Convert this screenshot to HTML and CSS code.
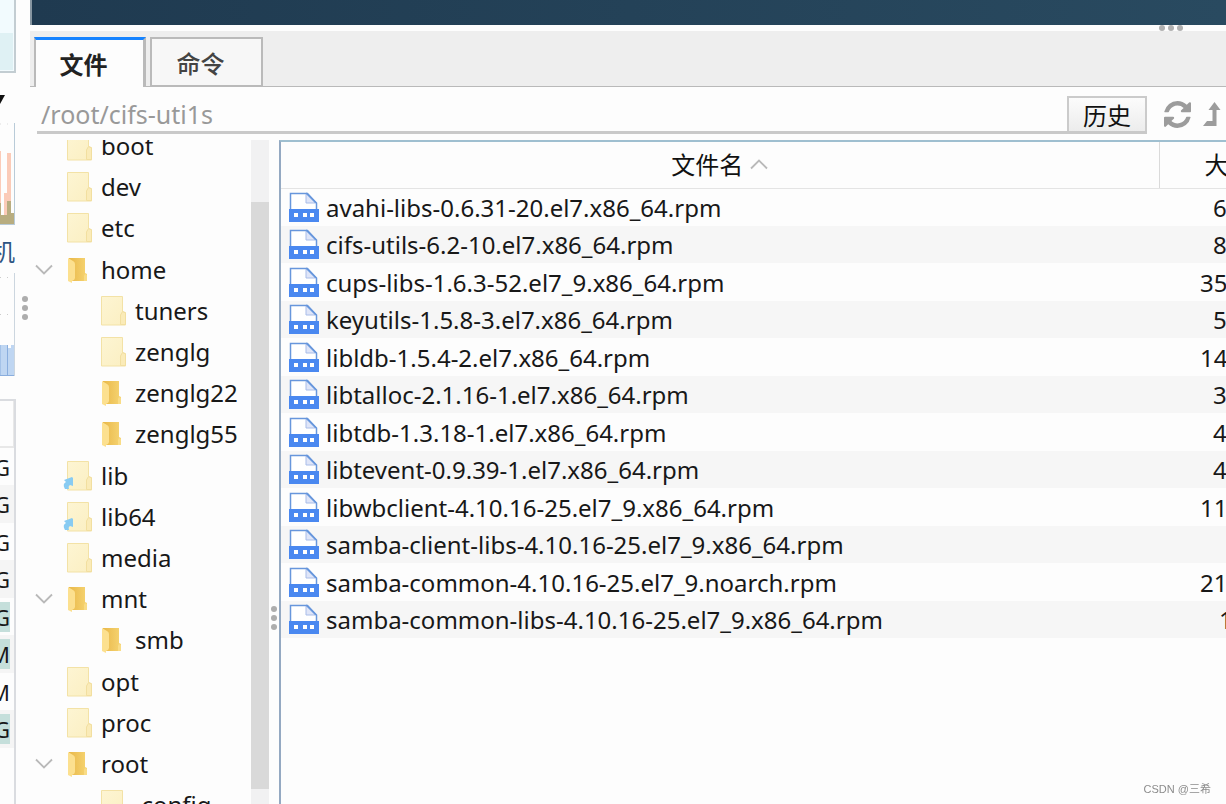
FILE: index.html
```
<!DOCTYPE html>
<html lang="zh-CN">
<head>
<meta charset="utf-8">
<title>文件</title>
<link rel="stylesheet" href="styles.css">
</head>
<body>
<svg class="defs" width="0" height="0" aria-hidden="true">
  <defs>
    <linearGradient id="pale" x1="0" x2="1" y1="0" y2="1"><stop offset="0" stop-color="#fdf5d3"/><stop offset="1" stop-color="#fbefc2"/></linearGradient>
    <linearGradient id="gold" x1="0" x2="1"><stop offset="0" stop-color="#e9b849"/><stop offset="1" stop-color="#f6d472"/></linearGradient>
    <symbol id="folder" viewBox="0 0 28 32">
      <path d="M1.500 1.500h21v15l3 1v12.500h-24z" fill="url(#pale)" stroke="#f3e2a6"/>
      <path d="M20.500 29.500v-9.500l2-3.500 3 1.500v11.500z" fill="#faebb8" stroke="#f2dfa0"/>
    </symbol>
    <symbol id="open-folder" viewBox="0 0 28 32">
      <path d="M3 4h16v15l2 1v7H3z" fill="url(#gold)"/>
      <path d="M2 4l5 3q2 1 2 3v14q0 2-3 3v2l-4-2z" fill="#fce08f"/>
      <path d="M18 27v-5l1-2 2 1v6z" fill="#f9dc86"/>
    </symbol>
    <symbol id="rpm" viewBox="0 0 32 32">
      <path d="M2.500 19V1.500h17L28.500 11v8" fill="#fff" stroke="#6796dc" stroke-width="1.500"/>
      <path d="M18 2v9h9" fill="#dfe5f8" stroke="#a9bde9"/>
      <path d="M18 1l10 10" stroke="#6796dc" stroke-width="1.500"/>
      <path d="M1 17h30v13H1z" fill="#4a88f0"/>
      <path d="M6 21h4v4H6zM15 21h4v4h-4zM22 21h4v4h-4z" fill="#fff"/>
    </symbol>
    <symbol id="chevron" viewBox="0 0 18 12"><path d="M1 1.500l8 8 8-8" fill="none" stroke="#b9b9b9" stroke-width="1.800"/></symbol>
  </defs>
</svg>

<div class="app">
  <aside class="monitor">
    <div class="gauge"><div class="gauge-fill"></div></div>
    <svg class="drop" viewBox="0 0 15 10"><path d="M-4 0h9L0 9z" fill="#111"/></svg>
    <svg class="chart net" viewBox="0 0 15 102">
      <path d="M0 1h15M0 68h15" stroke="#ddd" stroke-dasharray="1 6"/>
      <path d="M0 28h1v73H0zM4 70h4v31H4zM7 30h4v71H7z" fill="#fbcbb8"/>
      <path d="M0 80h1v12h6V78h4v12h4v11H0z" fill="#b8ad80"/>
      <path d="M14.500 0v101M0 101.500h15" stroke="#b9cbd8"/>
    </svg>
    <div class="host">机</div>
    <svg class="chart disk" viewBox="0 0 15 104">
      <path d="M0 4.500h15M0 41.500h15" stroke="#ccc" stroke-dasharray="1 6"/>
      <path d="M0 72h8v3h3v-3h4v31H0z" fill="#bfd6f2"/>
      <path d="M0 72v31M7.500 72v31M0 102.500h15" stroke="#8aaede"/>
      <path d="M14.500 0v103" stroke="#ccd6df"/>
    </svg>
    <div class="usage">
      <div class="usage-head"></div>
      <div class="usage-row"><span>G</span></div>
      <div class="usage-row"><span>G</span></div>
      <div class="usage-row"><span>G</span></div>
      <div class="usage-row"><span>G</span></div>
      <div class="usage-row"><span class="hot">G</span></div>
      <div class="usage-row"><span class="hot">M</span></div>
      <div class="usage-row"><span>M</span></div>
      <div class="usage-row"><span class="hot">G</span></div>
    </div>
  </aside>
  <div class="gutter"><svg class="grip" viewBox="0 0 6 26"><g fill="#adadad"><circle cx="3" cy="4" r="3"/><circle cx="3" cy="13" r="3"/><circle cx="3" cy="22" r="3"/></g></svg></div>

  <main class="main">
    <div class="terminal"></div>
    <div class="hsplit"><svg class="hgrip" viewBox="0 0 26 6"><g fill="#b0b0b0"><circle cx="4" cy="3" r="3"/><circle cx="13" cy="3" r="3"/><circle cx="22" cy="3" r="3"/></g></svg></div>
    <nav class="tabs">
      <button class="tab active" type="button">文件</button>
      <button class="tab" type="button">命令</button>
    </nav>
    <div class="pathbar">
      <div class="pathfield">
        <input class="path" type="text" value="/root/cifs-uti1s" aria-label="路径">
        <button class="history" type="button">历史</button>
      </div>
      <button class="tool" type="button" aria-label="刷新"><svg class="refresh" viewBox="0 0 1536 1536"><path fill="#9c9c9c" d="M1511 928q0 5-1 7-64 268-268 434.500t-478 166.500q-146 0-282.500-55t-243.500-157l-129 129q-19 19-45 19t-45-19-19-45v-448q0-26 19-45t45-19h448q26 0 45 19t19 45-19 45l-137 137q71 66 161 102t187 36q134 0 250-65t186-179q11-17 53-117 8-23 30-23h192q13 0 22.500 9.500t9.500 22.500zm25-800v448q0 26-19 45t-45 19h-448q-26 0-45-19t-19-45 19-45l138-138q-148-137-349-137-134 0-250 65t-186 179q-11 17-53 117-8 23-30 23h-199q-13 0-22.500-9.500t-9.500-22.500v-7q65-268 270-434.500t480-166.500q146 0 284 55.500t245 156.500l130-129q19-19 45-19t45 19 19 45z"/></svg></button>
      <button class="tool up" type="button" aria-label="上级目录"><svg class="level" viewBox="0 0 18 26"><path fill="#9c9c9c" d="M11.500 1l6 8h-4v16H0l4-5h5.500V9h-4z"/></svg></button>
    </div>
    <div class="browser">
      <div class="tree-pane">
        <ul class="tree">
          <li><i class="twist"></i><svg class="fi"><use href="#folder"/></svg>boot</li>
          <li><i class="twist"></i><svg class="fi"><use href="#folder"/></svg>dev</li>
          <li><i class="twist"></i><svg class="fi"><use href="#folder"/></svg>etc</li>
          <li><svg class="twist"><use href="#chevron"/></svg><svg class="fi"><use href="#open-folder"/></svg>home</li>
          <li class="sub"><svg class="fi"><use href="#folder"/></svg>tuners</li>
          <li class="sub"><svg class="fi"><use href="#folder"/></svg>zenglg</li>
          <li class="sub"><svg class="fi"><use href="#open-folder"/></svg>zenglg22</li>
          <li class="sub"><svg class="fi"><use href="#open-folder"/></svg>zenglg55</li>
          <li><i class="twist"></i><svg class="fi"><use href="#folder"/><path d="M-2 20l8-3 1 1v8l-3-1q-2 1-1 4h-4q-3-5 1-7z" fill="#88cbf2"/></svg>lib</li>
          <li><i class="twist"></i><svg class="fi"><use href="#folder"/><path d="M-2 20l8-3 1 1v8l-3-1q-2 1-1 4h-4q-3-5 1-7z" fill="#88cbf2"/></svg>lib64</li>
          <li><i class="twist"></i><svg class="fi"><use href="#folder"/></svg>media</li>
          <li><svg class="twist"><use href="#chevron"/></svg><svg class="fi"><use href="#open-folder"/></svg>mnt</li>
          <li class="sub"><svg class="fi"><use href="#open-folder"/></svg>smb</li>
          <li><i class="twist"></i><svg class="fi"><use href="#folder"/></svg>opt</li>
          <li><i class="twist"></i><svg class="fi"><use href="#folder"/></svg>proc</li>
          <li><svg class="twist"><use href="#chevron"/></svg><svg class="fi"><use href="#open-folder"/></svg>root</li>
          <li class="sub"><svg class="fi"><use href="#folder"/></svg>.config</li>
        </ul>
        <div class="scroll"><div class="thumb"></div></div>
      </div>
      <div class="vsplit"><svg class="grip" viewBox="0 0 6 26"><g fill="#adadad"><circle cx="3" cy="4" r="3"/><circle cx="3" cy="13" r="3"/><circle cx="3" cy="22" r="3"/></g></svg></div>
      <div class="list-pane">
        <table class="files">
          <thead><tr><th class="name-col">文件名<svg class="sort" viewBox="0 0 18 12"><path d="M1 10.500l8-8 8 8" fill="none" stroke="#b9b9b9" stroke-width="1.800"/></svg></th><th class="size-col">大</th></tr></thead>
          <tbody>
            <tr><td><svg class="rpm"><use href="#rpm"/></svg>avahi-libs-0.6.31-20.el7.x86_64.rpm</td><td class="d1">6</td></tr>
            <tr><td><svg class="rpm"><use href="#rpm"/></svg>cifs-utils-6.2-10.el7.x86_64.rpm</td><td class="d1">8</td></tr>
            <tr><td><svg class="rpm"><use href="#rpm"/></svg>cups-libs-1.6.3-52.el7_9.x86_64.rpm</td><td class="d2">35</td></tr>
            <tr><td><svg class="rpm"><use href="#rpm"/></svg>keyutils-1.5.8-3.el7.x86_64.rpm</td><td class="d1">5</td></tr>
            <tr><td><svg class="rpm"><use href="#rpm"/></svg>libldb-1.5.4-2.el7.x86_64.rpm</td><td class="d2">14</td></tr>
            <tr><td><svg class="rpm"><use href="#rpm"/></svg>libtalloc-2.1.16-1.el7.x86_64.rpm</td><td class="d1">3</td></tr>
            <tr><td><svg class="rpm"><use href="#rpm"/></svg>libtdb-1.3.18-1.el7.x86_64.rpm</td><td class="d1">4</td></tr>
            <tr><td><svg class="rpm"><use href="#rpm"/></svg>libtevent-0.9.39-1.el7.x86_64.rpm</td><td class="d1">4</td></tr>
            <tr><td><svg class="rpm"><use href="#rpm"/></svg>libwbclient-4.10.16-25.el7_9.x86_64.rpm</td><td class="d2">11</td></tr>
            <tr><td><svg class="rpm"><use href="#rpm"/></svg>samba-client-libs-4.10.16-25.el7_9.x86_64.rpm</td><td></td></tr>
            <tr><td><svg class="rpm"><use href="#rpm"/></svg>samba-common-4.10.16-25.el7_9.noarch.rpm</td><td class="d2">21</td></tr>
            <tr><td><svg class="rpm"><use href="#rpm"/></svg>samba-common-libs-4.10.16-25.el7_9.x86_64.rpm</td><td class="d0">1</td></tr>
          </tbody>
        </table>
      </div>
    </div>
  </main>
</div>
<div class="watermark">CSDN @三希</div>
</body>
</html>
```
FILE: styles.css
```
* { box-sizing: border-box; }
body {
  margin: 0;
  background: #fdfdfd;
  color: #181818;
  font: 24px/32px "Noto Sans", "Noto Sans CJK SC", sans-serif;
  overflow: hidden;
}
button, input { font: inherit; color: inherit; margin: 0; border-radius: 0; }
svg { display: block; flex: none; }
.defs { position: absolute; }
.app { display: flex; height: 100vh; }

.monitor { width: 16px; display: flex; flex-direction: column; overflow: hidden; flex: none; }
.gauge { height: 73px; flex: none; border: solid #c3cdd2; border-width: 0 2px 2px 0; background: #f2fbfe; padding: 33px 1px 1px 0; }
.gauge-fill { height: 100%; background: #dff1f4; }
.drop { width: 15px; height: 10px; margin-top: 22px; }
.chart { width: 15px; }
.net { height: 102px; margin-top: 18px; }
.host { display: flex; justify-content: flex-end; width: 15px; height: 32px; margin: 11px 0 5px; color: #2d5583; flex: none; }
.disk { height: 104px; }
.usage { flex: 1; margin-top: 22px; border: solid #dadce0; border-width: 2px 2px 0 0; font-size: 22px; width: 16px; }
.usage-head { height: 47px; border: solid #e8e8e8; border-width: 0 1px 2px 0; }
.usage-row { display: flex; justify-content: flex-end; align-items: center; height: 37px; padding-right: 4px; }
.usage-row:nth-child(odd) { height: 38px; background: #f5f5f5; }
.usage-row span { line-height: 30px; }
.hot { background: #c5dfdb; }

.gutter { width: 14px; flex: none; padding: 295px 0 0 6px; }
.grip { width: 6px; height: 26px; }

.main { flex: 1; min-width: 0; display: flex; flex-direction: column; }
.terminal { height: 25px; flex: none; background: linear-gradient(90deg, #1f3a50, #294a60); border: solid #8796a1; border-width: 0 0 0 2px; }
.hsplit { height: 6px; flex: none; display: flex; justify-content: flex-end; padding-right: 42px; }
.hgrip { width: 26px; height: 6px; }
.tabs { height: 56px; flex: none; display: flex; gap: 4px; padding: 6px 0 0 4px; background: linear-gradient(#eee 55px, #b9b9b9 55px); }
.tab { width: 113px; padding: 2px 12px 0 0; border: 2px solid #bababa; background: #f7f7f7; color: #444; font-weight: 500; font-family: "Noto Sans CJK SC", sans-serif; }
.tab.active { width: 112px; padding-top: 0; border-top: 3px solid #1683ff; border-bottom: 0; border-right-width: 3px; background: #fdfdfd; color: #222; font-weight: 700; }

.pathbar { height: 53px; flex: none; display: flex; align-items: flex-start; padding-left: 7px; }
.pathfield { flex: 1; min-width: 0; height: 47px; display: flex; align-items: flex-end; border-bottom: 3px solid #c9c9c9; }
.path { flex: 1; min-width: 0; height: 34px; border: 0; padding: 0 4px; background: none; color: #999; outline: none; font-size: 25px; }
.history { width: 80px; height: 35px; padding: 2px 0 0; border: 2px solid #cbcbcb; border-bottom: 0; background: linear-gradient(#fcfcfc, #ececec); color: #111; }
.tool { border: 0; padding: 0; background: none; margin: 14px 0 0 17px; }
.refresh { width: 27px; height: 27px; }
.up { margin-left: 12px; margin-right: 5px; }
.level { width: 18px; height: 26px; }

.browser { flex: 1; min-height: 0; display: flex; }
.tree-pane { width: 239px; flex: none; display: flex; justify-content: space-between; overflow: hidden; }
.tree { list-style: none; margin: -15px 0 0; padding: 0 0 0 5px; color: #181818; }
.tree li { display: flex; align-items: center; height: 41px; white-space: nowrap; }
.tree li:nth-child(5n + 3) { height: 42px; }
.tree .twist { width: 18px; height: 12px; margin-right: 13px; }
.tree .fi { width: 28px; height: 32px; margin-right: 7px; overflow: visible; }
.tree .sub { padding-left: 65px; }
.scroll { width: 18px; background: #f1f1f2; padding: 62px 0 15px; }
.thumb { height: 100%; background: #d9d9d9; }
.vsplit { width: 10px; flex: none; padding: 465px 0 0 2px; }

.list-pane { flex: 1; min-width: 0; overflow: hidden; border: solid #94a9c2; border-width: 2px 0 0 2px; border-top-color: #9fbfd0; }
.files { width: 100%; table-layout: fixed; border-collapse: collapse; }
.files th { height: 46px; padding: 0; font-weight: 400; border-bottom: 1px solid #e4e4e4; vertical-align: middle; color: #111; }
.name-col { border-right: 1px solid #dadada; }
.files .size-col { width: 67px; padding-left: 45px; text-align: left; white-space: nowrap; }
.sort { display: inline-block; width: 18px; height: 12px; margin-left: 7px; vertical-align: 4px; }
.files td { height: 38px; padding: 1px 0 0; white-space: nowrap; }
.files tr:nth-child(even) td { height: 37px; background: #f6f6f6; }
.files td:first-child { padding-left: 7px; }
.rpm { display: inline-block; width: 32px; height: 32px; margin-right: 6px; vertical-align: top; }
.files .d0 { padding-left: 60px; }
.files .d1 { padding-left: 54px; }
.files .d2 { padding-left: 41px; }

.watermark { position: fixed; right: 15px; bottom: 7px; font: 11px/16px "Liberation Sans", "Noto Sans CJK SC", sans-serif; color: #8c8c8c; }
```
